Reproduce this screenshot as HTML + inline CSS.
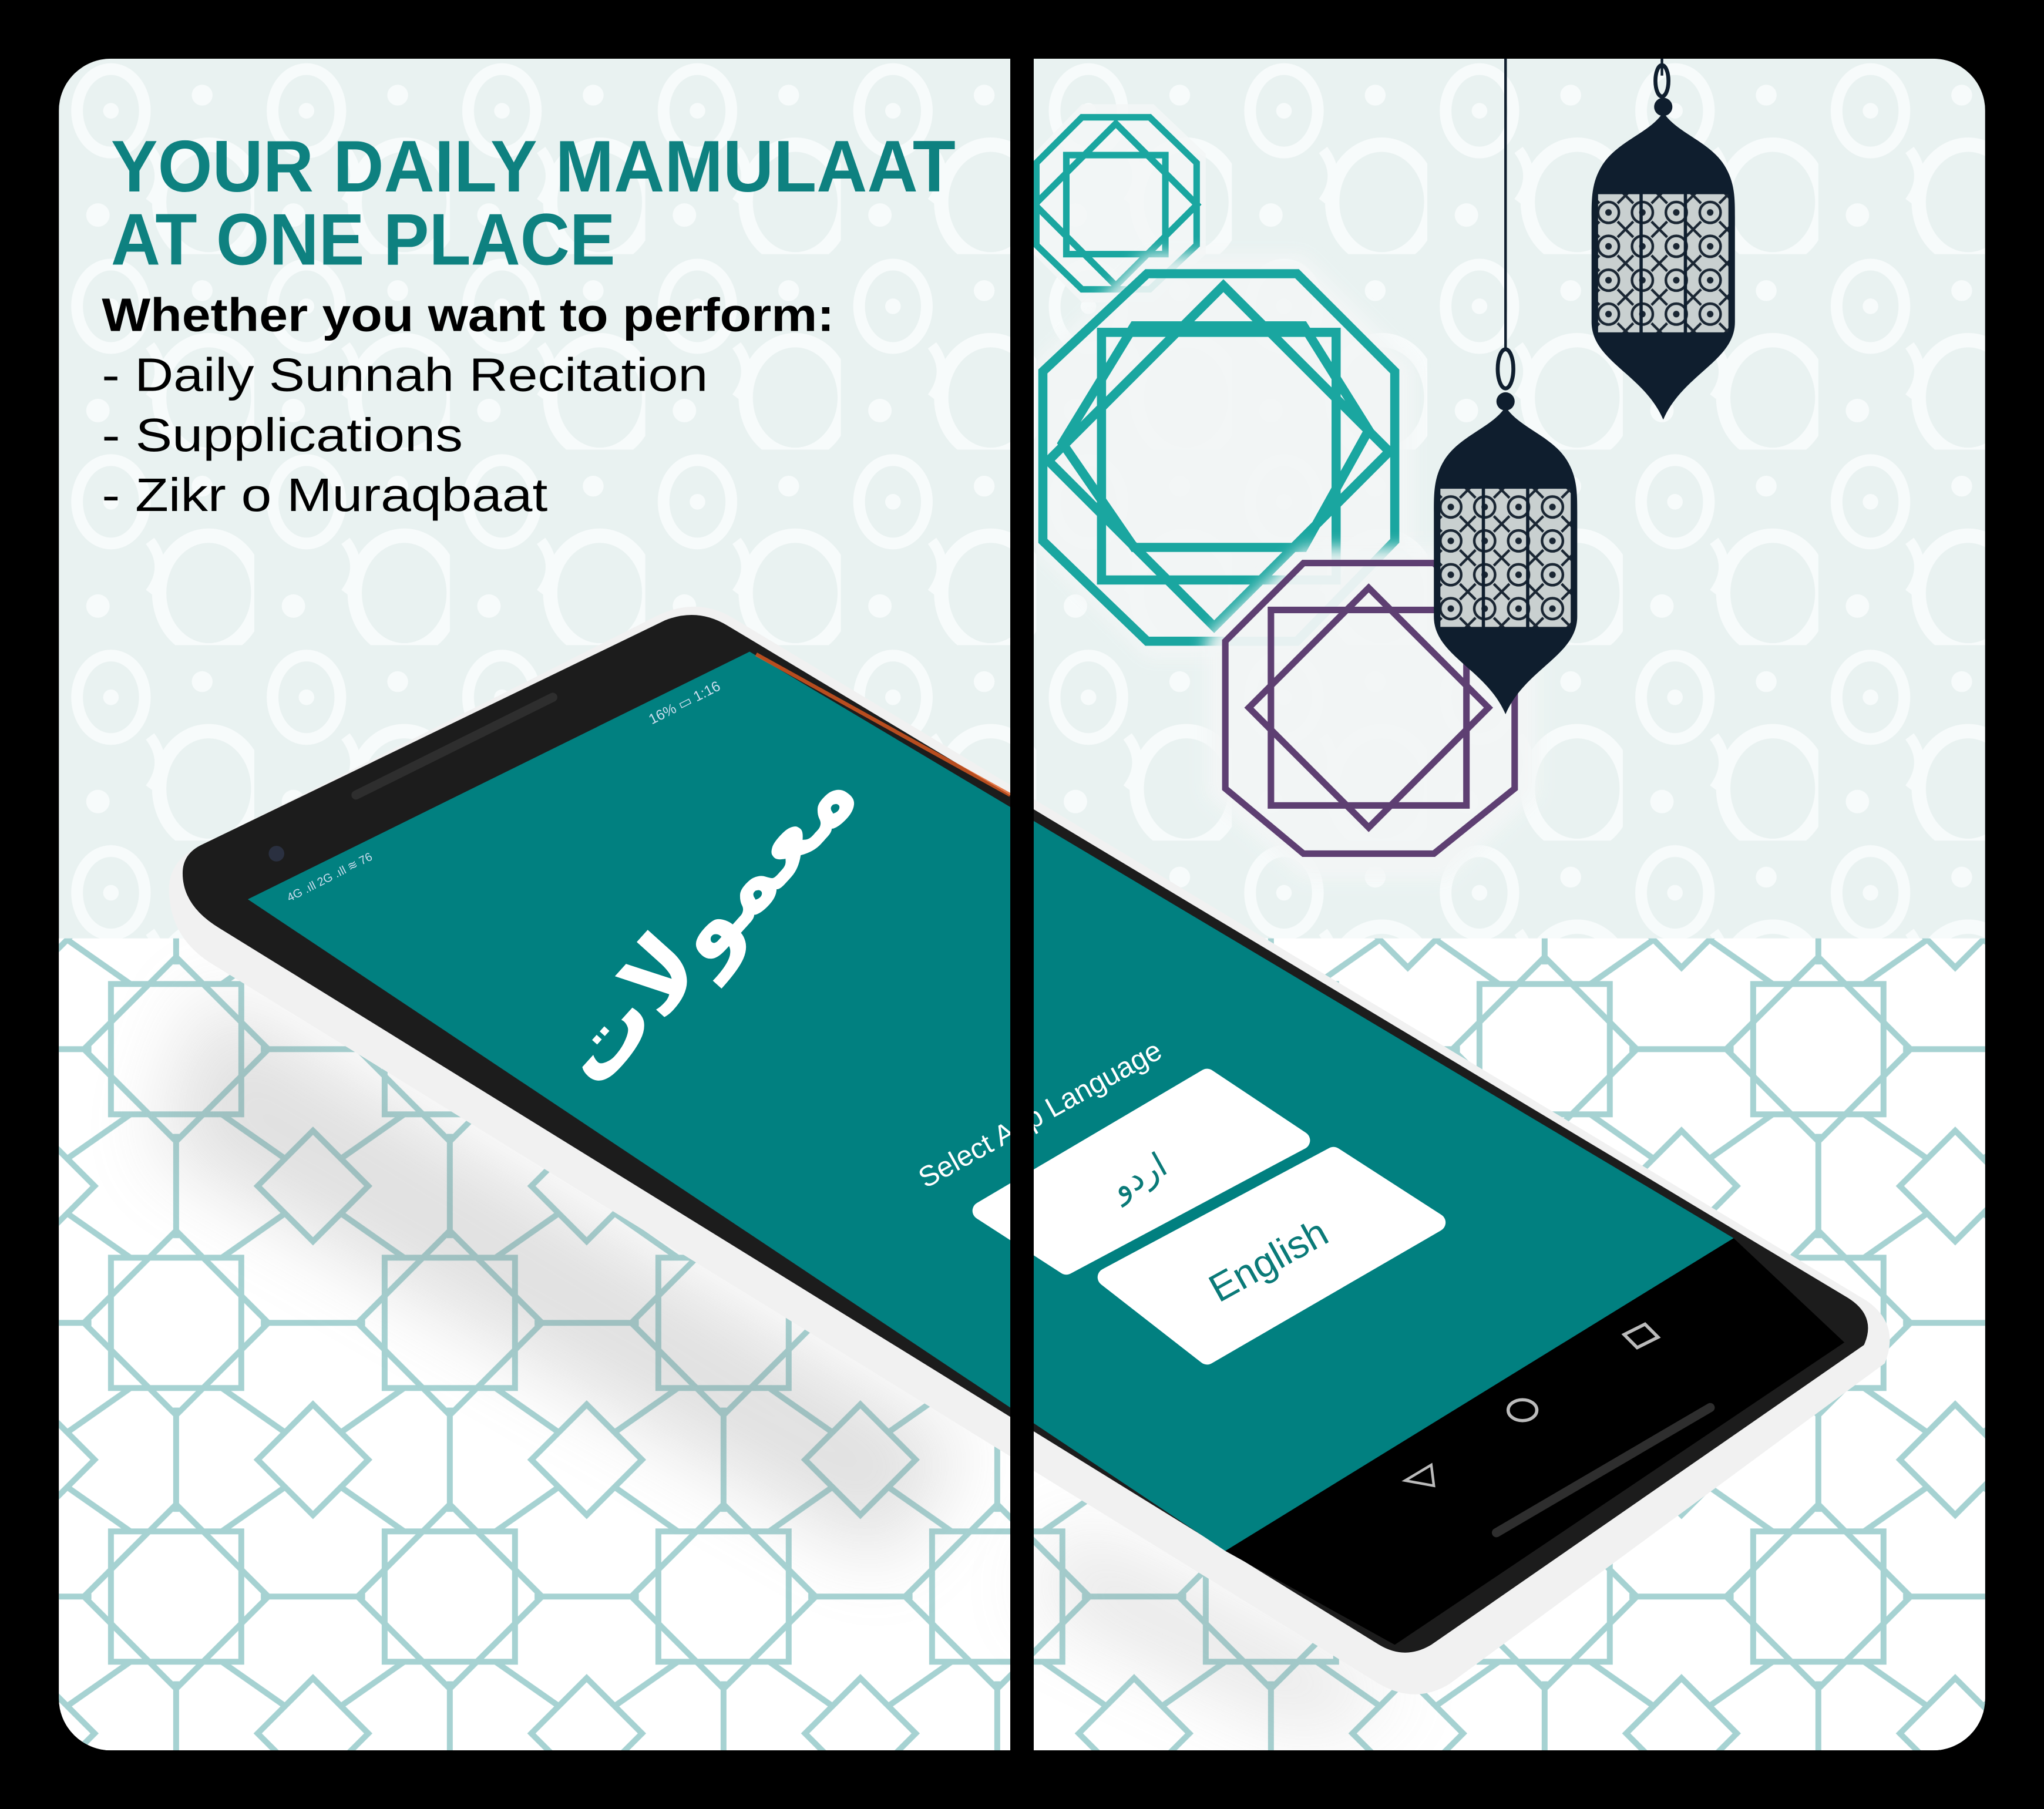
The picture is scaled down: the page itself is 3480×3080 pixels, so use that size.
<!DOCTYPE html>
<html><head><meta charset="utf-8"><style>
html,body{margin:0;padding:0;background:#000;}
svg{display:block;}
</style></head><body>
<svg width="3480" height="3080" viewBox="0 0 1568 1388" xmlns="http://www.w3.org/2000/svg">
<defs>
<pattern id="dots" x="45" y="45" width="150" height="150" patternUnits="userSpaceOnUse">
<rect width="150" height="150" fill="#e9f2f1"/>
<ellipse cx="40" cy="40" rx="26" ry="32" fill="none" stroke="#f7fbfb" stroke-width="9"/>
<circle cx="40" cy="40" r="6" fill="#f7fbfb"/>
<ellipse cx="115" cy="110" rx="38" ry="44" fill="none" stroke="#f7fbfb" stroke-width="11"/>
<circle cx="110" cy="28" r="8" fill="#f7fbfb"/>
<circle cx="30" cy="120" r="9" fill="#f7fbfb"/>
<path d="M70 70 Q85 90 70 110" fill="none" stroke="#f7fbfb" stroke-width="8"/>
</pattern>
<pattern id="stars" x="30" y="700" width="210" height="210" patternUnits="userSpaceOnUse">
<rect width="210" height="210" fill="#fff"/>
<g fill="none" stroke="#a6d2d2" stroke-width="4.5">
<rect x="55" y="55" width="100" height="100"/>
<rect x="55" y="55" width="100" height="100" transform="rotate(45 105 105)"/>
<rect x="-30" y="-30" width="60" height="60" transform="rotate(45 0 0)"/>
<rect x="180" y="-30" width="60" height="60" transform="rotate(45 210 0)"/>
<rect x="-30" y="180" width="60" height="60" transform="rotate(45 0 210)"/>
<rect x="180" y="180" width="60" height="60" transform="rotate(45 210 210)"/>
<path d="M0 105 L40 105 M170 105 L210 105 M105 0 L105 40 M105 170 L105 210"/>
<path d="M20 20 L70 55 M190 20 L140 55 M20 190 L70 155 M190 190 L140 155"/>
</g>
</pattern>
<filter id="blur" x="-30%" y="-30%" width="160%" height="160%"><feGaussianBlur stdDeviation="30"/></filter>
<filter id="sblur" x="-30%" y="-30%" width="160%" height="160%"><feGaussianBlur stdDeviation="6"/></filter>
<clipPath id="card"><rect x="45" y="45" width="1478" height="1298" rx="40"/></clipPath>
<pattern id="grill" width="26" height="26" patternUnits="userSpaceOnUse">
<rect width="26" height="26" fill="#c9d0d0"/>
<circle cx="13" cy="13" r="8" fill="none" stroke="#1a2633" stroke-width="2"/>
<circle cx="13" cy="13" r="2.5" fill="#1a2633"/>
<path d="M0 0 L6 6 M26 0 L20 6 M0 26 L6 20 M26 26 L20 20" stroke="#1a2633" stroke-width="2"/>
</pattern>
<g id="lantern">
<circle cx="55" cy="10" r="7" fill="#0f1e2e"/>
<path d="M55,14 C45,30 20,36 8,55 C0,68 0,80 0,95 L0,175 C0,205 40,215 55,250 C70,215 110,205 110,175 L110,95 C110,80 110,68 102,55 C90,36 65,30 55,14 Z" fill="#0f1e2e"/>
<rect x="4" y="76" width="102" height="108" fill="url(#grill)" stroke="#0f1e2e" stroke-width="2"/>
<path d="M38 76 V184 M72 76 V184" stroke="#0f1e2e" stroke-width="2.5"/>
</g>
</defs>

<rect width="1568" height="1388" fill="#000"/>
<g clip-path="url(#card)">
<rect x="45" y="45" width="1478" height="1298" fill="url(#dots)"/>
<rect x="45" y="720" width="1478" height="623" fill="url(#stars)"/>
<!-- phone shadow -->
<path d="M160 760 L740 1110 L680 1200 L120 880 Z" fill="#888" opacity="0.25" filter="url(#blur)"/>
<path d="M820 1170 L1080 1300 L1000 1330 L790 1230 Z" fill="#888" opacity="0.2" filter="url(#blur)"/>

<!-- right decorations -->
<g>
<polygon points="830,80 885,80 925,118 925,195 885,232 830,232 793,195 793,118" fill="#f3f6f6" opacity="0.9"/>
<g fill="none" stroke="#1aa6a0" stroke-width="5">
<polygon points="830,90 882,90 918,125 918,188 882,222 830,222 795,188 795,125"/>
<rect x="812" y="113" width="88" height="88" transform="rotate(45 856 157)"/>
<rect x="818" y="119" width="76" height="76"/>
</g>
<polygon points="880,195 1000,195 1085,280 1085,420 1000,505 880,505 793,420 793,280" fill="#f3f6f6" opacity="0.9" filter="url(#sblur)"/>
<g fill="none" stroke="#1aa6a0" stroke-width="7">
<polygon points="880,210 995,210 1070,285 1070,415 995,492 880,492 800,415 800,285"/>
<rect x="845" y="255" width="180" height="190" />
<rect x="845" y="255" width="180" height="190" transform="rotate(45 935 350)"/>
<polygon points="870,250 1000,250 1050,330 1000,420 870,420 815,340"/>
</g>
<polygon points="1000,420 1110,420 1180,490 1180,610 1110,675 1000,675 925,610 925,490" fill="#f3f6f6" opacity="0.95" filter="url(#sblur)"/>
<g fill="none" stroke="#5e3f72" stroke-width="5">
<polygon points="1000,432 1100,432 1162,492 1162,605 1100,655 1000,655 940,605 940,492"/>
<rect x="985" y="478" width="130" height="130" transform="rotate(45 1050 543)"/>
<rect x="975" y="468" width="150" height="150"/>
</g>
<line x1="1155" y1="45" x2="1155" y2="268" stroke="#0f1e2e" stroke-width="2"/>
<ellipse cx="1155" cy="283" rx="6" ry="15" fill="none" stroke="#0f1e2e" stroke-width="3"/>
<use href="#lantern" x="1100" y="298"/>
<line x1="1275" y1="45" x2="1275" y2="58" stroke="#0f1e2e" stroke-width="2"/>
<ellipse cx="1275" cy="62" rx="5" ry="12" fill="none" stroke="#0f1e2e" stroke-width="3"/>
<use href="#lantern" x="1221" y="72"/>
</g>

<!-- phone body -->
<path d="M130,690 Q126,662 152,650 L505,472 Q535,458 562,474 L1432,998 Q1458,1016 1446,1046 L1112,1292 Q1086,1308 1058,1292 L160,738 Q133,720 130,690 Z" fill="#f1f1f1"/>
<path d="M140,670 Q140,655 155,648 L510,476 Q535,466 558,480 L1418,996 Q1440,1010 1430,1032 L1098,1262 Q1078,1274 1058,1262 L168,712 Q140,695 140,670 Z" fill="#1c1c1c"/>
<path d="M190,690 L575,500 L1330,950 L940,1190 Z" fill="#018080"/>
<path d="M1330,950 L940,1190 L1070,1262 L1415,1030 Z" fill="#000"/>
<line x1="273" y1="610" x2="424" y2="535" stroke="#2e2e2e" stroke-width="7" stroke-linecap="round"/>
<line x1="1148" y1="1176" x2="1312" y2="1080" stroke="#2e2e2e" stroke-width="7" stroke-linecap="round"/>
<circle cx="212" cy="655" r="6" fill="#2a3040"/>
<line x1="580" y1="502" x2="775" y2="610" stroke="#e05a20" stroke-width="3" opacity="0.8"/>
<!-- nav icons -->
<polygon points="1078,1136 1098,1124 1100,1140" fill="none" stroke="#bbb" stroke-width="2"/>
<ellipse cx="1168" cy="1082" rx="11" ry="8" fill="none" stroke="#bbb" stroke-width="2.5"/>
<polygon points="1246,1024 1262,1016 1272,1026 1256,1034" fill="none" stroke="#bbb" stroke-width="2.5"/>
<!-- status bar -->
<text x="0" y="0" transform="translate(500,556) rotate(-27)" font-family="Liberation Sans, sans-serif" font-size="11" fill="#cde">16% ▭ 1:16</text>
<text x="0" y="0" transform="translate(222,692) rotate(-27)" font-family="Liberation Sans, sans-serif" font-size="9" fill="#cde">4G .ıll 2G .ıll ≋ 76</text>
<!-- urdu logo -->
<text x="0" y="0" transform="translate(560,725) rotate(-48)" text-anchor="middle" font-family="DejaVu Sans, sans-serif" font-size="72" font-weight="bold" fill="#fff">معمولات</text>
<!-- language select -->
<text x="0" y="0" transform="translate(710,912) rotate(-29)" font-family="Liberation Sans, sans-serif" font-size="22" fill="#fff">Select App Language</text>
<polygon points="753,929 926,827 998,875 818,971" fill="#fff" stroke="#fff" stroke-width="14" stroke-linejoin="round"/>
<text x="0" y="0" transform="translate(878,910) rotate(-29)" text-anchor="middle" font-family="DejaVu Sans, sans-serif" font-size="26" fill="#0a7a78">اردو</text>
<polygon points="849,980 1023,887 1102,938 926,1040" fill="#fff" stroke="#fff" stroke-width="14" stroke-linejoin="round"/>
<text x="0" y="0" transform="translate(978,976) rotate(-29)" text-anchor="middle" font-family="Liberation Sans, sans-serif" font-size="30" fill="#0a7a78">English</text>

<!-- headline text -->
<text x="85" y="147" textLength="648" lengthAdjust="spacingAndGlyphs" font-family="Liberation Sans, sans-serif" font-weight="bold" font-size="56" fill="#0e8180">YOUR DAILY MAMULAAT</text>
<text x="85" y="203" textLength="387" lengthAdjust="spacingAndGlyphs" font-family="Liberation Sans, sans-serif" font-weight="bold" font-size="56" fill="#0e8180">AT ONE PLACE</text>
<text x="78" y="254" textLength="562" lengthAdjust="spacingAndGlyphs" font-family="Liberation Sans, sans-serif" font-weight="bold" font-size="36" fill="#000">Whether you want to perform:</text>
<text x="78" y="300" textLength="465" lengthAdjust="spacingAndGlyphs" font-family="Liberation Sans, sans-serif" font-size="36" fill="#000">- Daily Sunnah Recitation</text>
<text x="78" y="346" textLength="277" lengthAdjust="spacingAndGlyphs" font-family="Liberation Sans, sans-serif" font-size="36" fill="#000">- Supplications</text>
<text x="78" y="392" textLength="342" lengthAdjust="spacingAndGlyphs" font-family="Liberation Sans, sans-serif" font-size="36" fill="#000">- Zikr o Muraqbaat</text>
</g>
<!-- divider -->
<rect x="775" y="40" width="18" height="1310" fill="#000"/>
</svg>
</body></html>
